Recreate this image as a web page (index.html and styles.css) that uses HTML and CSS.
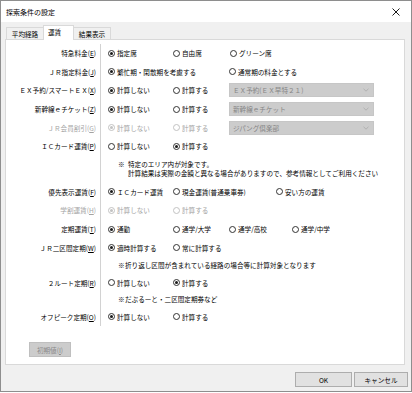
FILE: index.html
```html
<!DOCTYPE html>
<html lang="ja">
<head>
  <meta charset="UTF-8">
  <title>探索条件の設定</title>
  <link rel="stylesheet" href="styles.css">
</head>
<body>
  <div class="window">
    <div class="titlebar">
      <span class="title">探索条件の設定</span>
      <svg class="close" width="8" height="8" viewBox="0 0 8 8"><path d="M0.5 0.5L7.5 7.5M7.5 0.5L0.5 7.5" stroke="#000" stroke-width="0.9"/></svg>
    </div>
    <div class="body">
      <div class="tabs">
        <div class="tab t1">平均経路</div>
        <div class="tab t2 active">運賃</div>
        <div class="tab t3">結果表示</div>
      </div>
      <div class="panel">
        <div class="form">
          <div class="lbl">特急料金(<u>E</u>)</div>
          <div class="ctl">
            <span class="opt w65"><i class="radio on"></i>指定席</span>
            <span class="opt w57"><i class="radio"></i>自由席</span>
            <span class="opt"><i class="radio"></i>グリーン席</span>
          </div>

          <div class="lbl">ＪＲ指定料金(<u>J</u>)</div>
          <div class="ctl">
            <span class="opt w121"><i class="radio on"></i>繁忙期・閑散期を考慮する</span>
            <span class="opt"><i class="radio"></i>通常期の料金とする</span>
          </div>

          <div class="lbl">ＥＸ予約/スマートＥＸ(<u>X</u>)</div>
          <div class="ctl">
            <span class="opt w65"><i class="radio on"></i>計算しない</span>
            <span class="opt w56"><i class="radio"></i>計算する</span>
            <div class="select">ＥＸ予約(ＥＸ早特２１)<svg class="chev" width="6" height="4" viewBox="0 0 6 4"><path d="M0.5 0.8L3 3.2L5.5 0.8" fill="none" stroke="#a8a8a8" stroke-width="0.8"/></svg></div>
          </div>

          <div class="lbl">新幹線ｅチケット(<u>Z</u>)</div>
          <div class="ctl">
            <span class="opt w65"><i class="radio on"></i>計算しない</span>
            <span class="opt w56"><i class="radio"></i>計算する</span>
            <div class="select">新幹線ｅチケット<svg class="chev" width="6" height="4" viewBox="0 0 6 4"><path d="M0.5 0.8L3 3.2L5.5 0.8" fill="none" stroke="#a8a8a8" stroke-width="0.8"/></svg></div>
          </div>

          <div class="lbl off">ＪＲ会員割引(<u>G</u>)</div>
          <div class="ctl off">
            <span class="opt w65"><i class="radio on"></i>計算しない</span>
            <span class="opt w56"><i class="radio"></i>計算する</span>
            <div class="select">ジパング倶楽部<svg class="chev" width="6" height="4" viewBox="0 0 6 4"><path d="M0.5 0.8L3 3.2L5.5 0.8" fill="none" stroke="#a8a8a8" stroke-width="0.8"/></svg></div>
          </div>

          <div class="lbl">ＩＣカード運賃(<u>P</u>)</div>
          <div class="ctl">
            <span class="opt w65"><i class="radio"></i>計算しない</span>
            <span class="opt"><i class="radio on"></i>計算する</span>
          </div>

          <div class="lbl note-a"></div>
          <div class="ctl note note-a">
            <span class="mark wide">※</span>
            <div>特定のエリア内が対象です。<br>計算結果は実際の金額と異なる場合がありますので、参考情報としてご利用ください</div>
          </div>

          <div class="lbl">優先表示運賃(<u>F</u>)</div>
          <div class="ctl">
            <span class="opt w65"><i class="radio on"></i>ＩＣカード運賃</span>
            <span class="opt w103"><i class="radio"></i>現金運賃(普通乗車券)</span>
            <span class="opt"><i class="radio"></i>安い方の運賃</span>
          </div>

          <div class="lbl off">学割運賃(<u>H</u>)</div>
          <div class="ctl off">
            <span class="opt w65"><i class="radio on"></i>計算しない</span>
            <span class="opt"><i class="radio"></i>計算する</span>
          </div>

          <div class="lbl">定期運賃(<u>T</u>)</div>
          <div class="ctl">
            <span class="opt w65"><i class="radio on"></i>通勤</span>
            <span class="opt w56"><i class="radio"></i>通学/大学</span>
            <span class="opt w63"><i class="radio"></i>通学/高校</span>
            <span class="opt"><i class="radio"></i>通学/中学</span>
          </div>

          <div class="lbl">ＪＲ二区間定期(<u>W</u>)</div>
          <div class="ctl">
            <span class="opt w65"><i class="radio on"></i>適時計算する</span>
            <span class="opt"><i class="radio"></i>常に計算する</span>
          </div>

          <div class="lbl note-b"></div>
          <div class="ctl note note-b">
            <span class="mark">※</span>
            <div>折り返し区間が含まれている経路の場合等に計算対象となります</div>
          </div>

          <div class="lbl">２ルート定期(<u>R</u>)</div>
          <div class="ctl">
            <span class="opt w65"><i class="radio"></i>計算しない</span>
            <span class="opt"><i class="radio on"></i>計算する</span>
          </div>

          <div class="lbl note-c"></div>
          <div class="ctl note note-c">
            <span class="mark">※</span>
            <div>だぶるーと・二区間定期券など</div>
          </div>

          <div class="lbl">オフピーク定期(<u>O</u>)</div>
          <div class="ctl">
            <span class="opt w65"><i class="radio on"></i>計算しない</span>
            <span class="opt"><i class="radio"></i>計算する</span>
          </div>
        </div>
        <button class="btn reset" disabled>初期値(<u>I</u>)</button>
      </div>
      <div class="footer">
        <button class="btn ok">OK</button>
        <button class="btn cancel">キャンセル</button>
      </div>
    </div>
  </div>
</body>
</html>
```

FILE: styles.css
```css
body {
  margin: 0;
  background: #ffffff;
  font-family: "Noto Sans CJK JP", "Noto Sans", sans-serif;
  font-size: 6.6px;
  color: #000;
}

.window {
  width: 412px;
  height: 392px;
  box-sizing: border-box;
  border: 1px solid #8e8e8e;
  display: flex;
  flex-direction: column;
}

.titlebar {
  height: 21px;
  background: #fff;
  display: flex;
  align-items: center;
  justify-content: space-between;
  padding: 0 11px 0 5px;
  flex-shrink: 0;
}

.title {
  font-size: 7px;
}

.body {
  flex: 1;
  background: #f0f0f0;
  display: flex;
  flex-direction: column;
}

.tabs {
  height: 17px;
  display: flex;
  align-items: flex-end;
  padding-left: 5px;
}

.tab {
  height: 12px;
  line-height: 12px;
  box-sizing: border-box;
  border: 1px solid #d9d9d9;
  border-bottom: none;
  background: #f0f0f0;
  text-align: center;
  font-size: 6.6px;
}

.t1 { width: 38px; }
.t2 { width: 31px; margin-left: -1px; }
.t3 { width: 38px; margin-left: -1px; }

.tab.active {
  height: 15px;
  line-height: 13px;
  background: #fff;
  margin-bottom: -1px;
  position: relative;
  z-index: 1;
  text-align: left;
  padding-left: 4px;
}

.panel {
  margin: 0 6px 0 4px;
  height: 326px;
  box-sizing: border-box;
  border: 1px solid #d9d9d9;
  background: #fff;
  padding-top: 4px;
  flex-shrink: 0;
}

.form {
  display: grid;
  grid-template-columns: 94px 1fr;
}

.lbl {
  height: 18.6px;
  display: flex;
  align-items: center;
  justify-content: flex-end;
  padding-right: 4px;
  white-space: nowrap;
}

.ctl {
  height: 18.6px;
  display: flex;
  align-items: center;
  border-left: 1px solid #d2d2d2;
  padding-left: 7px;
  white-space: nowrap;
}

.off {
  color: #a3a3a3;
}

.opt {
  display: flex;
  align-items: center;
  flex-shrink: 0;
}

.w56 { width: 56px; }
.w57 { width: 57px; }
.w63 { width: 63px; }
.w65 { width: 65px; }
.w103 { width: 103px; }
.w121 { width: 121px; }

.radio {
  width: 7px;
  height: 7px;
  box-sizing: border-box;
  border: 1px solid #333;
  border-radius: 50%;
  margin-right: 2px;
  display: flex;
  align-items: center;
  justify-content: center;
  background: #fff;
}

.radio.on::after {
  content: "";
  width: 3px;
  height: 3px;
  border-radius: 50%;
  background: #1a1a1a;
}

.off .radio {
  border-color: #c2c2c2;
}

.off .radio.on::after {
  background: #c2c2c2;
}

.select {
  width: 145px;
  height: 14px;
  box-sizing: border-box;
  background: #cccccc;
  border: 1px solid #c6c6c6;
  color: #858585;
  display: flex;
  align-items: center;
  justify-content: space-between;
  padding: 0 4px 0 3px;
}

.note {
  align-items: flex-start;
  padding-left: 17px;
  line-height: 9.5px;
}

.lbl.note-a, .note-a { height: 27px; }
.note-a { padding-top: 4px; box-sizing: border-box; }
.lbl.note-b, .note-b { height: 16.6px; }
.note-b { padding-top: 3.6px; box-sizing: border-box; }
.lbl.note-c, .note-c { height: 15.4px; }
.note-c { padding-top: 3px; box-sizing: border-box; }

.mark {
  width: 7px;
  flex-shrink: 0;
}

.mark.wide {
  width: 10px;
}

.btn {
  font-family: inherit;
  font-size: 6.6px;
  padding: 0;
  height: 15px;
  box-sizing: border-box;
  background: #e1e1e1;
  border: 1px solid #adadad;
  color: #000;
}

.reset {
  display: block;
  width: 42px;
  margin: 16px 0 0 23px;
  background: #cccccc;
  border-color: #bfbfbf;
  color: #8a8a8a;
}

.footer {
  display: flex;
  justify-content: flex-end;
  gap: 2px;
  padding: 7px 3px 0 0;
}

.ok { width: 57px; }
.cancel { width: 54px; }
```
